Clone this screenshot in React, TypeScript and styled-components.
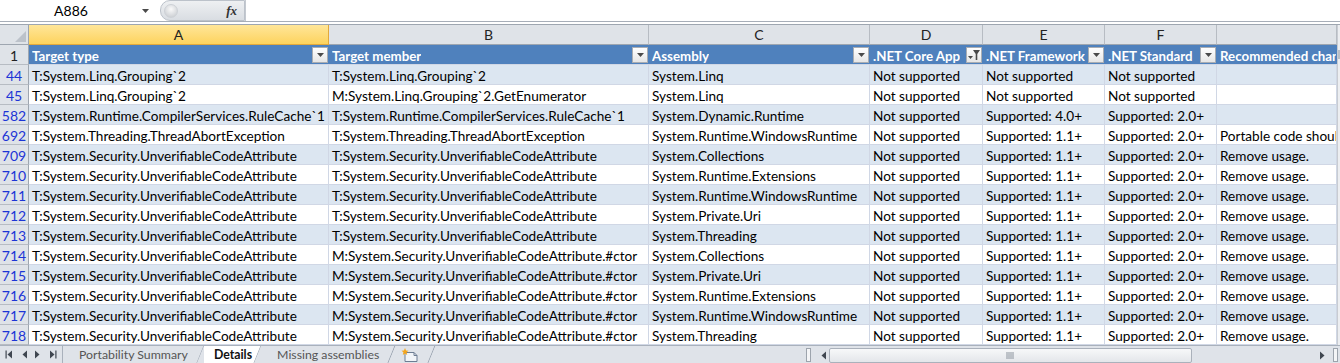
import React from 'react';
import styled, {createGlobalStyle} from 'styled-components';

const GlobalStyle = createGlobalStyle`
    html, body {
        margin: 0;
        padding: 0;
        background: #fff;
        overflow: hidden;
    }
    body {
        font-family: Lato, "Liberation Sans", sans-serif;
        font-size: 13.6px;
        color: #000;
    }
`

const COLS = [300, 320, 221, 113, 122, 112, 120];
const LETTERS = ['A', 'B', 'C', 'D', 'E', 'F', ''];
const HEADERS = ['Target type', 'Target member', 'Assembly', '.NET Core App', '.NET Framework', '.NET Standard', 'Recommended changes'];

const SEC = 'T:System.Security.UnverifiableCodeAttribute';
const SEC_M = 'M:System.Security.UnverifiableCodeAttribute.#ctor';

const ROWS: (string | number)[][] = [
    [44, 'T:System.Linq.Grouping`2', 'T:System.Linq.Grouping`2', 'System.Linq', 'Not supported', 'Not supported', 'Not supported', ''],
    [45, 'T:System.Linq.Grouping`2', 'M:System.Linq.Grouping`2.GetEnumerator', 'System.Linq', 'Not supported', 'Not supported', 'Not supported', ''],
    [582, 'T:System.Runtime.CompilerServices.RuleCache`1', 'T:System.Runtime.CompilerServices.RuleCache`1', 'System.Dynamic.Runtime', 'Not supported', 'Supported: 4.0+', 'Supported: 2.0+', ''],
    [692, 'T:System.Threading.ThreadAbortException', 'T:System.Threading.ThreadAbortException', 'System.Runtime.WindowsRuntime', 'Not supported', 'Supported: 1.1+', 'Supported: 2.0+', 'Portable code should not use ThreadAbortException'],
    [709, SEC, SEC, 'System.Collections', 'Not supported', 'Supported: 1.1+', 'Supported: 2.0+', 'Remove usage.'],
    [710, SEC, SEC, 'System.Runtime.Extensions', 'Not supported', 'Supported: 1.1+', 'Supported: 2.0+', 'Remove usage.'],
    [711, SEC, SEC, 'System.Runtime.WindowsRuntime', 'Not supported', 'Supported: 1.1+', 'Supported: 2.0+', 'Remove usage.'],
    [712, SEC, SEC, 'System.Private.Uri', 'Not supported', 'Supported: 1.1+', 'Supported: 2.0+', 'Remove usage.'],
    [713, SEC, SEC, 'System.Threading', 'Not supported', 'Supported: 1.1+', 'Supported: 2.0+', 'Remove usage.'],
    [714, SEC, SEC_M, 'System.Collections', 'Not supported', 'Supported: 1.1+', 'Supported: 2.0+', 'Remove usage.'],
    [715, SEC, SEC_M, 'System.Private.Uri', 'Not supported', 'Supported: 1.1+', 'Supported: 2.0+', 'Remove usage.'],
    [716, SEC, SEC_M, 'System.Runtime.Extensions', 'Not supported', 'Supported: 1.1+', 'Supported: 2.0+', 'Remove usage.'],
    [717, SEC, SEC_M, 'System.Runtime.WindowsRuntime', 'Not supported', 'Supported: 1.1+', 'Supported: 2.0+', 'Remove usage.'],
    [718, SEC, SEC_M, 'System.Threading', 'Not supported', 'Supported: 1.1+', 'Supported: 2.0+', 'Remove usage.'],
];

const Page = styled.div`
    width: 1340px;
    height: 363px;
    display: flex;
    flex-direction: column;
    overflow: hidden;
`

/* formula bar */

const FormulaBar = styled.div`
    height: 21px;
    display: flex;
    border-bottom: 1px solid #a7aeb8;
    background: #fff;
`

const NameBox = styled.div`
    width: 160px;
    display: flex;
    align-items: center;
    font-size: 14px;
`

const NameText = styled.span`
    width: 142px;
    text-align: center;
`

const FxBox = styled.div`
    width: 85px;
    display: flex;
    align-items: center;
    justify-content: space-between;
    background: linear-gradient(#eef0f2, #d9dde2);
    border: 1px solid #bcc2ca;
    border-radius: 10px 0 0 10px;
    box-sizing: border-box;
    padding: 0 7px 0 3px;
`

const CircleButton = styled.div`
    width: 12px;
    height: 12px;
    border-radius: 50%;
    background: radial-gradient(circle at 50% 35%, #fafafa, #c3c7cc);
    border: 1px solid #cdd1d6;
`

const FxText = styled.span`
    font-family: "Liberation Serif", serif;
    font-style: italic;
    font-weight: bold;
    font-size: 13px;
    color: #333;
`

const FormulaInput = styled.div`
    flex: 1;
    border-left: 1px solid #c4c9d0;
`

const Gap = styled.div`
    height: 2px;
    border-bottom: 1px solid #9ea6b0;
`

/* sheet */

const SheetArea = styled.div`
    display: flex;
    height: 320px;
`

const Grid = styled.div`
    flex: 1;
    display: grid;
    grid-template-columns: 29px ${COLS.map(c => `${c}px`).join(' ')};
    grid-auto-rows: 20px;
    overflow: hidden;
`

const Corner = styled.div`
    background: #dfe3e8;
    border-right: 1px solid #9ea6b0;
    border-bottom: 1px solid #9ea6b0;
    box-sizing: border-box;
    display: flex;
    align-items: flex-end;
    justify-content: flex-end;
    padding: 0 2px 2px 0;
`

const ColHead = styled.div<{ $selected?: boolean }>`
    box-sizing: border-box;
    background: ${p => p.$selected ? 'linear-gradient(#ffe699, #fdd35e)' : '#dfe3e8'};
    border-right: 1px solid ${p => p.$selected ? '#e2a93c' : '#b7bcc3'};
    border-bottom: 1px solid ${p => p.$selected ? '#e2a93c' : '#9ea6b0'};
    display: flex;
    align-items: center;
    justify-content: center;
    color: #222;
    font-size: 14px;
`

const RowHead = styled.div<{ $filtered?: boolean }>`
    box-sizing: border-box;
    background: #dfe3e8;
    border-right: 1px solid #9ea6b0;
    border-bottom: 1px solid #b7bcc3;
    display: flex;
    align-items: flex-end;
    justify-content: center;
    font-size: 14px;
    color: ${p => p.$filtered ? '#1c35d6' : '#222'};
`

const HeadCell = styled.div`
    box-sizing: border-box;
    background: #4f81bd;
    border-bottom: 1px solid #d0d7e5;
    display: flex;
    align-items: center;
    justify-content: space-between;
    padding: 0 1px 0 3px;
    color: #fff;
    font-weight: bold;
    font-size: 13.3px;
    overflow: hidden;
    white-space: nowrap;
`

const HeadLabel = styled.span`
    overflow: hidden;
    padding-top: 3px;
`

const FilterButton = styled.div`
    width: 16px;
    height: 16px;
    flex: none;
    box-sizing: border-box;
    background: linear-gradient(#ffffff, #e6e6e6);
    border: 1px solid #a9adb3;
    display: flex;
    align-items: center;
    justify-content: center;
`

const Cell = styled.div<{ $band: boolean }>`
    box-sizing: border-box;
    background: ${p => p.$band ? '#dce6f1' : '#fff'};
    border-right: 1px solid #d0d7e5;
    border-bottom: 1px solid #d0d7e5;
    padding: 0 3px;
    display: flex;
    align-items: flex-end;
    white-space: nowrap;
    overflow: hidden;
`

const VScroll = styled.div`
    width: 3px;
    background: #eceef1;
    border-left: 1px solid #c8ccd2;
    box-sizing: border-box;
`

const VThumb = styled.div`
    height: 9px;
    margin-top: 25px;
    background: #b9bec6;
`

/* tab bar */

const TabBar = styled.div`
    height: 18px;
    display: flex;
    background: #dfe3e9;
    border-top: 1px solid #a9b1bc;
    box-sizing: border-box;
    font-size: 12.3px;
`

const NavButtons = styled.div`
    width: 63px;
    display: flex;
    align-items: center;
    justify-content: space-around;
    padding: 0 2px;
    box-sizing: border-box;
    border-right: 1px solid #a9b1bc;
`

const Tabs = styled.div`
    width: 743px;
    display: flex;
    align-items: stretch;
`

const Tab = styled.div<{ $active?: boolean }>`
    position: relative;
    display: flex;
    align-items: center;
    padding: 0 ${p => p.$active ? '9px' : '16px'} 0 ${p => p.$active ? '10px' : '16px'};
    color: ${p => p.$active ? '#111' : '#555'};
    font-weight: ${p => p.$active ? 'bold' : 'normal'};
    background: ${p => p.$active ? '#fff' : 'transparent'};
    clip-path: polygon(0 0, 100% 0, calc(100% - 7px) 100%, 0 100%);
    &::after {
        content: '';
        position: absolute;
        right: 3px;
        top: 0;
        bottom: 0;
        width: 1px;
        background: #8f99a7;
        transform: skewX(-22deg);
    }
`

const NewSheet = styled(Tab)`
    padding: 0 16px 0 6px;
`

const HScroll = styled.div`
    flex: 1;
    display: flex;
    align-items: center;
    padding-top: 1px;
`

const Splitter = styled.div`
    width: 5px;
    height: 14px;
    margin-right: 6px;
    background: #f4f5f7;
    border: 1px solid #9da4ad;
    box-sizing: border-box;
`

const ArrowButton = styled.div`
    width: 12px;
    display: flex;
    justify-content: center;
`

const Track = styled.div`
    flex: 1;
    height: 15px;
    display: flex;
    align-items: center;
`

const Thumb = styled.div`
    width: 363px;
    height: 15px;
    box-sizing: border-box;
    border: 1px solid #aab1bb;
    border-radius: 2px;
    background: linear-gradient(#f7f8f9, #e3e6ea);
    display: flex;
    align-items: center;
    justify-content: center;
`

const CornerBox = styled.div`
    width: 5px;
    height: 14px;
    margin: 0 2px 0 4px;
    background: #f4f5f7;
    border: 1px solid #9da4ad;
    box-sizing: border-box;
`

const Triangle = ({dir, bar}: {dir: 'left' | 'right', bar?: boolean}) => (
    <svg width="8" height="9" viewBox="0 0 8 9">
        {dir === 'left'
            ? <polygon points="7,0.5 7,8.5 2.5,4.5" fill="#3f4650" />
            : <polygon points="1,0.5 1,8.5 5.5,4.5" fill="#3f4650" />}
        {bar && (dir === 'left'
            ? <rect x="0.5" y="0.5" width="1.2" height="8" fill="#3f4650" />
            : <rect x="6.3" y="0.5" width="1.2" height="8" fill="#3f4650" />)}
    </svg>
)

const DropArrow = () => (
    <svg width="7" height="4" viewBox="0 0 7 4">
        <polygon points="0,0 7,0 3.5,4" fill="#4a4a4a" />
    </svg>
)

const FilterOnIcon = () => (
    <svg width="14" height="14" viewBox="0 0 14 14">
        <polygon points="1,8 6,8 3.5,11" fill="#4a4a4a" />
        <polygon points="6,2 13,2 10.3,6 10.3,12 8.7,12 8.7,6" fill="#4a4a4a" />
    </svg>
)

const SelectAllMark = () => (
    <svg width="11" height="11" viewBox="0 0 11 11">
        <polygon points="11,0 11,11 0,11" fill="#bcc2ca" />
    </svg>
)

const NewSheetIcon = () => (
    <svg width="18" height="14" viewBox="0 0 18 14">
        <path d="M4 4.5 H13 L16 7.5 V13.5 H4 Z" fill="#f1f4f8" stroke="#6d7d93" strokeWidth="1" />
        <path d="M13 4.5 V7.5 H16" fill="none" stroke="#6d7d93" strokeWidth="1" />
        <polygon points="4,0 5,2.5 7.5,2.8 5.6,4.3 6.2,7 4,5.6 1.8,7 2.4,4.3 0.5,2.8 3,2.5" fill="#f4a51c" />
    </svg>
)

const Grip = () => (
    <svg width="9" height="7" viewBox="0 0 9 7">
        {[0.5, 2.5, 4.5, 6.5].map(x => <rect key={x} x={x} y="0" width="1" height="7" fill="#8b939e" />)}
    </svg>
)

const App = () => {
    return (
        <Page>
            <GlobalStyle />
            <FormulaBar>
                <NameBox>
                    <NameText>A886</NameText>
                    <DropArrow />
                </NameBox>
                <FxBox>
                    <CircleButton />
                    <FxText>fx</FxText>
                </FxBox>
                <FormulaInput />
            </FormulaBar>
            <Gap />
            <SheetArea>
                <Grid>
                    <Corner><SelectAllMark /></Corner>
                    {LETTERS.map((l, i) => <ColHead key={i} $selected={i === 0}>{l}</ColHead>)}

                    <RowHead>1</RowHead>
                    {HEADERS.map((h, i) => (
                        <HeadCell key={h}>
                            <HeadLabel>{h}</HeadLabel>
                            {i < 6 && <FilterButton>{i === 3 ? <FilterOnIcon /> : <DropArrow />}</FilterButton>}
                        </HeadCell>
                    ))}

                    {ROWS.map((row, r) => (
                        <React.Fragment key={row[0]}>
                            <RowHead $filtered>{row[0]}</RowHead>
                            {row.slice(1).map((v, c) => <Cell key={c} $band={r % 2 === 0}>{v}</Cell>)}
                        </React.Fragment>
                    ))}
                </Grid>
                <VScroll><VThumb /></VScroll>
            </SheetArea>
            <TabBar>
                <NavButtons>
                    <Triangle dir="left" bar />
                    <Triangle dir="left" />
                    <Triangle dir="right" />
                    <Triangle dir="right" bar />
                </NavButtons>
                <Tabs>
                    <Tab>Portability Summary</Tab>
                    <Tab $active>Details</Tab>
                    <Tab>Missing assemblies</Tab>
                    <NewSheet><NewSheetIcon /></NewSheet>
                </Tabs>
                <HScroll>
                    <Splitter />
                    <ArrowButton><Triangle dir="left" /></ArrowButton>
                    <Track>
                        <Thumb><Grip /></Thumb>
                    </Track>
                    <ArrowButton><Triangle dir="right" /></ArrowButton>
                    <CornerBox />
                </HScroll>
            </TabBar>
        </Page>
    );
};

export default App;
